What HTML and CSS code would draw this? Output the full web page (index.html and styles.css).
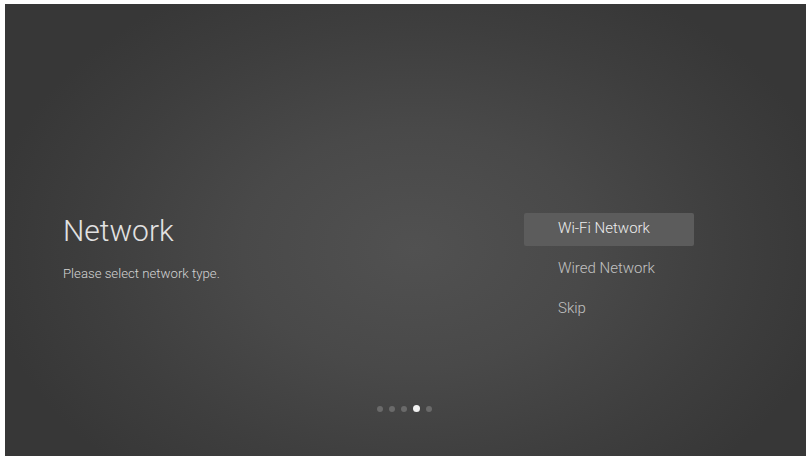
FILE: index.html
```html
<!DOCTYPE html>
<html lang="en">
<head>
<meta charset="utf-8">
<title>Network</title>
<link rel="stylesheet" href="styles.css">
</head>
<body>
<div class="screen">
  <div class="main">
    <div class="intro">
      <h1 class="title">Network</h1>
      <p class="subtitle">Please select network type.</p>
    </div>
    <ul class="menu">
      <li class="item active">Wi-Fi Network</li>
      <li class="item">Wired Network</li>
      <li class="item">Skip</li>
    </ul>
  </div>
  <div class="dots">
    <span class="dot"></span>
    <span class="dot"></span>
    <span class="dot"></span>
    <span class="dot on"></span>
    <span class="dot"></span>
  </div>
</div>
</body>
</html>
```

FILE: styles.css
```css
html, body {
  margin: 0;
  padding: 0;
  background: #ffffff;
}
body {
  padding: 4px 5px 6px 5px;
  font-family: Roboto, "Liberation Sans", sans-serif;
}
.screen {
  width: 801px;
  height: 452px;
  display: flex;
  flex-direction: column;
  background: radial-gradient(ellipse 430px 300px at 410px 245px, #515151 0%, #494949 40%, #3e3e3e 75%, #373737 100%);
  background-color: #373737;
}
.main {
  display: flex;
  padding-top: 209px;
  padding-left: 58px;
}
.intro {
  flex: 0 0 461px;
}
.title {
  margin: 0;
  font-size: 30px;
  line-height: 36px;
  font-weight: 300;
  color: #e2e2e2;
}
.subtitle {
  margin: 17px 0 0 0;
  font-size: 13.2px;
  line-height: 16px;
  font-weight: 300;
  color: #d4d4d4;
}
.menu {
  list-style: none;
  margin: 0;
  padding: 0;
  width: 170px;
  display: flex;
  flex-direction: column;
  gap: 7px;
}
.item {
  height: 30px;
  line-height: 31px;
  padding: 0 0 3px 34px;
  font-size: 15px;
  font-weight: 300;
  color: #c2c2c2;
  border-radius: 2px;
}
.item.active {
  background: #5c5c5c;
  color: #ededed;
}
.dots {
  margin-top: auto;
  padding-bottom: 44px;
  padding-right: 2px;
  display: flex;
  justify-content: center;
  align-items: center;
  gap: 6px;
}
.dot {
  width: 6px;
  height: 6px;
  border-radius: 50%;
  background: #6a6a6a;
}
.dot.on {
  width: 7px;
  height: 7px;
  background: #f2f2f2;
}
```
